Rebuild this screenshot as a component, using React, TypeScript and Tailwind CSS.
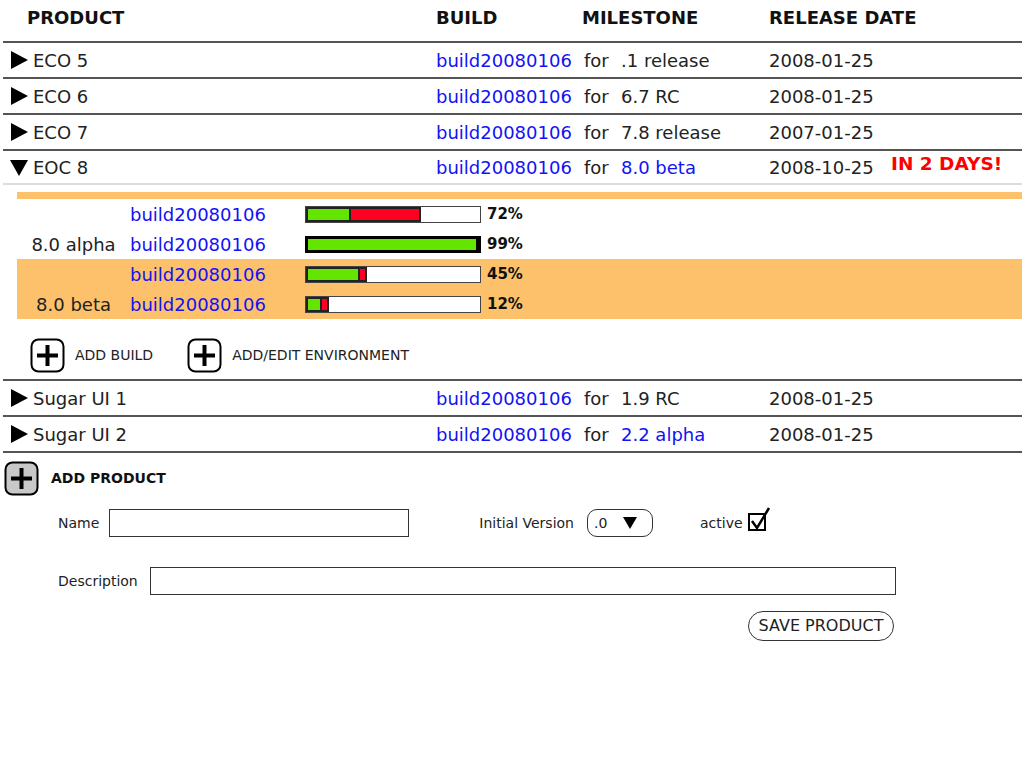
import React from 'react';

const BLUE = 'text-[#1212f5]';

const Triangle = ({ down = false }: { down?: boolean }) => (
  <svg width="18" height="18" viewBox="0 0 18 18" className="shrink-0">
    {down ? <polygon points="0,2 18,2 9,18" fill="#000" /> : <polygon points="1,0 18,9 1,18" fill="#000" />}
  </svg>
);

const PlusBox = ({ filled = false }: { filled?: boolean }) => (
  <svg width="35" height="35" viewBox="0 0 35 35" className="shrink-0">
    <rect x="1.5" y="1.5" width="32" height="32" rx="7" fill={filled ? '#c8c8c8' : '#fff'} stroke="#000" strokeWidth="2" />
    <line x1="7" y1="17.5" x2="28" y2="17.5" stroke="#000" strokeWidth="4" />
    <line x1="17.5" y1="7" x2="17.5" y2="28" stroke="#000" strokeWidth="4" />
  </svg>
);

type Product = {
  name: string;
  milestone: string;
  milestoneLink?: boolean;
  date: string;
  open?: boolean;
  note?: string;
};

const ProductRow = ({ p, last = false }: { p: Product; last?: boolean }) => (
  <div className={`flex items-center pl-[7px] ${last ? 'h-[34px] border-b-2 border-[#dcdcdc]' : 'h-[36px] border-b-2 border-[#555]'}`}>
    <div className="w-[426px] flex items-center gap-[5px]">
      <Triangle down={p.open} />
      <span>{p.name}</span>
    </div>
    <div className={`w-[148px] ${BLUE}`}>build20080106</div>
    <div className="w-[37px]">for</div>
    <div className={`w-[148px] ${p.milestoneLink ? BLUE : ''}`}>{p.milestone}</div>
    <div className="w-[122px]">{p.date}</div>
    {p.note && <div className="font-bold text-[18.5px] text-[#ff0000] -mt-[6px]">{p.note}</div>}
  </div>
);

type Bar = { green: number; red: number; pct: string; full?: boolean };

const Progress = ({ b }: { b: Bar }) => (
  <div className="flex items-center gap-[6px]">
    <div className={`w-[176px] h-[17px] bg-white flex ${b.full ? 'border-[3px] border-black' : 'border border-[#444]'}`}>
      <div className={`h-full bg-[#62e600] ${b.full ? '' : 'border-2 border-[#222]'}`} style={{ width: b.green }} />
      {b.red > 0 && <div className="h-full bg-[#ff0022] border-2 border-[#222] -ml-[2px]" style={{ width: b.red }} />}
      {b.full && <div className="h-full w-[2px] bg-white border-l-2 border-black ml-auto" />}
    </div>
    <span className="text-[15px] font-bold text-[#111]">{b.pct}</span>
  </div>
);

const BuildLine = ({ label, b }: { label?: string; b: Bar }) => (
  <div className="h-[30px] flex items-center pt-[1px]">
    <div className="w-[113px] text-center">{label}</div>
    <div className={`w-[175px] ${BLUE}`}>build20080106</div>
    <Progress b={b} />
  </div>
);

const Checkbox = () => (
  <svg width="26" height="26" viewBox="0 0 26 26" className="shrink-0">
    <rect x="2" y="7" width="16" height="16" fill="#fff" stroke="#000" strokeWidth="2" />
    <polyline points="5,14 10,21 22,1" fill="none" stroke="#000" strokeWidth="2.5" />
  </svg>
);

export default function App() {
  const top: Product[] = [
    { name: 'ECO 5', milestone: '.1 release', date: '2008-01-25' },
    { name: 'ECO 6', milestone: '6.7 RC', date: '2008-01-25' },
    { name: 'ECO 7', milestone: '7.8 release', date: '2007-01-25' },
  ];

  return (
    <div className="w-[1024px] h-[768px] bg-white text-[#222] text-[18px] font-['DejaVu_Sans',Verdana,sans-serif] overflow-hidden">
      <div className="ml-[3px] w-[1019px]">
        {/* header */}
        <div className="h-[43px] pb-[6px] flex items-center font-bold text-[#111] border-b-2 border-[#555]">
          <div className="w-[433px] pl-[24px]">PRODUCT</div>
          <div className="w-[146px]">BUILD</div>
          <div className="w-[187px]">MILESTONE</div>
          <div>RELEASE DATE</div>
        </div>

        {top.map((p) => (
          <ProductRow key={p.name} p={p} />
        ))}
        <ProductRow
          last
          p={{ name: 'EOC 8', milestone: '8.0 beta', milestoneLink: true, date: '2008-10-25', open: true, note: 'IN 2 DAYS!' }}
        />

        {/* expanded EOC 8 */}
        <div className="ml-[14px] mt-[7px]">
          <div className="h-[7px] bg-[#fcc16a]" />
          <div>
            <BuildLine b={{ green: 45, red: 72, pct: '72%' }} />
            <BuildLine label="8.0 alpha" b={{ green: 170, red: 0, pct: '99%', full: true }} />
          </div>
          <div className="bg-[#fcc16a]">
            <BuildLine b={{ green: 54, red: 9, pct: '45%' }} />
            <BuildLine label="8.0 beta" b={{ green: 16, red: 9, pct: '12%' }} />
          </div>
          <div className="pt-[19px] pb-[6px] pl-[13px] flex items-center text-[14px] text-[#222]">
            <PlusBox />
            <span className="ml-[10px]">ADD BUILD</span>
            <span className="ml-[34px]"><PlusBox /></span>
            <span className="ml-[10px]">ADD/EDIT ENVIRONMENT</span>
          </div>
        </div>
        <div className="border-b-2 border-[#555]" />

        <ProductRow p={{ name: 'Sugar UI 1', milestone: '1.9 RC', date: '2008-01-25' }} />
        <ProductRow p={{ name: 'Sugar UI 2', milestone: '2.2 alpha', milestoneLink: true, date: '2008-01-25' }} />
      </div>

      {/* add product */}
      <div className="mt-[8px] ml-[4px] flex items-center gap-[12px]">
        <PlusBox filled />
        <span className="text-[14px] font-bold text-[#111]">ADD PRODUCT</span>
      </div>

      <div className="pl-[58px] text-[14px] text-[#222]">
        <div className="mt-[13px] h-[28px] flex items-center">
          <span>Name</span>
          <div className="ml-[10px] w-[300px] h-[28px] border border-[#333]" />
          <span className="ml-[70px]">Initial Version</span>
          <div className="ml-[13px] w-[66px] h-[28px] border border-[#333] rounded-[10px] flex items-center pl-[6px]">
            <span>.0</span>
            <svg width="14" height="12" viewBox="0 0 14 12" className="ml-[16px]">
              <polygon points="0,0 14,0 7,12" fill="#000" />
            </svg>
          </div>
          <span className="ml-[47px]">active</span>
          <span className="ml-[4px] -mt-[6px]"><Checkbox /></span>
        </div>

        <div className="mt-[30px] h-[28px] flex items-center">
          <span>Description</span>
          <div className="ml-[12px] w-[746px] h-[28px] border border-[#333]" />
        </div>

        <div className="w-[836px] flex justify-end mt-[16px]">
          <div className="w-[146px] h-[30px] border border-[#333] rounded-full flex items-center justify-center text-[16px]">
            SAVE PRODUCT
          </div>
        </div>
      </div>
    </div>
  );
}
